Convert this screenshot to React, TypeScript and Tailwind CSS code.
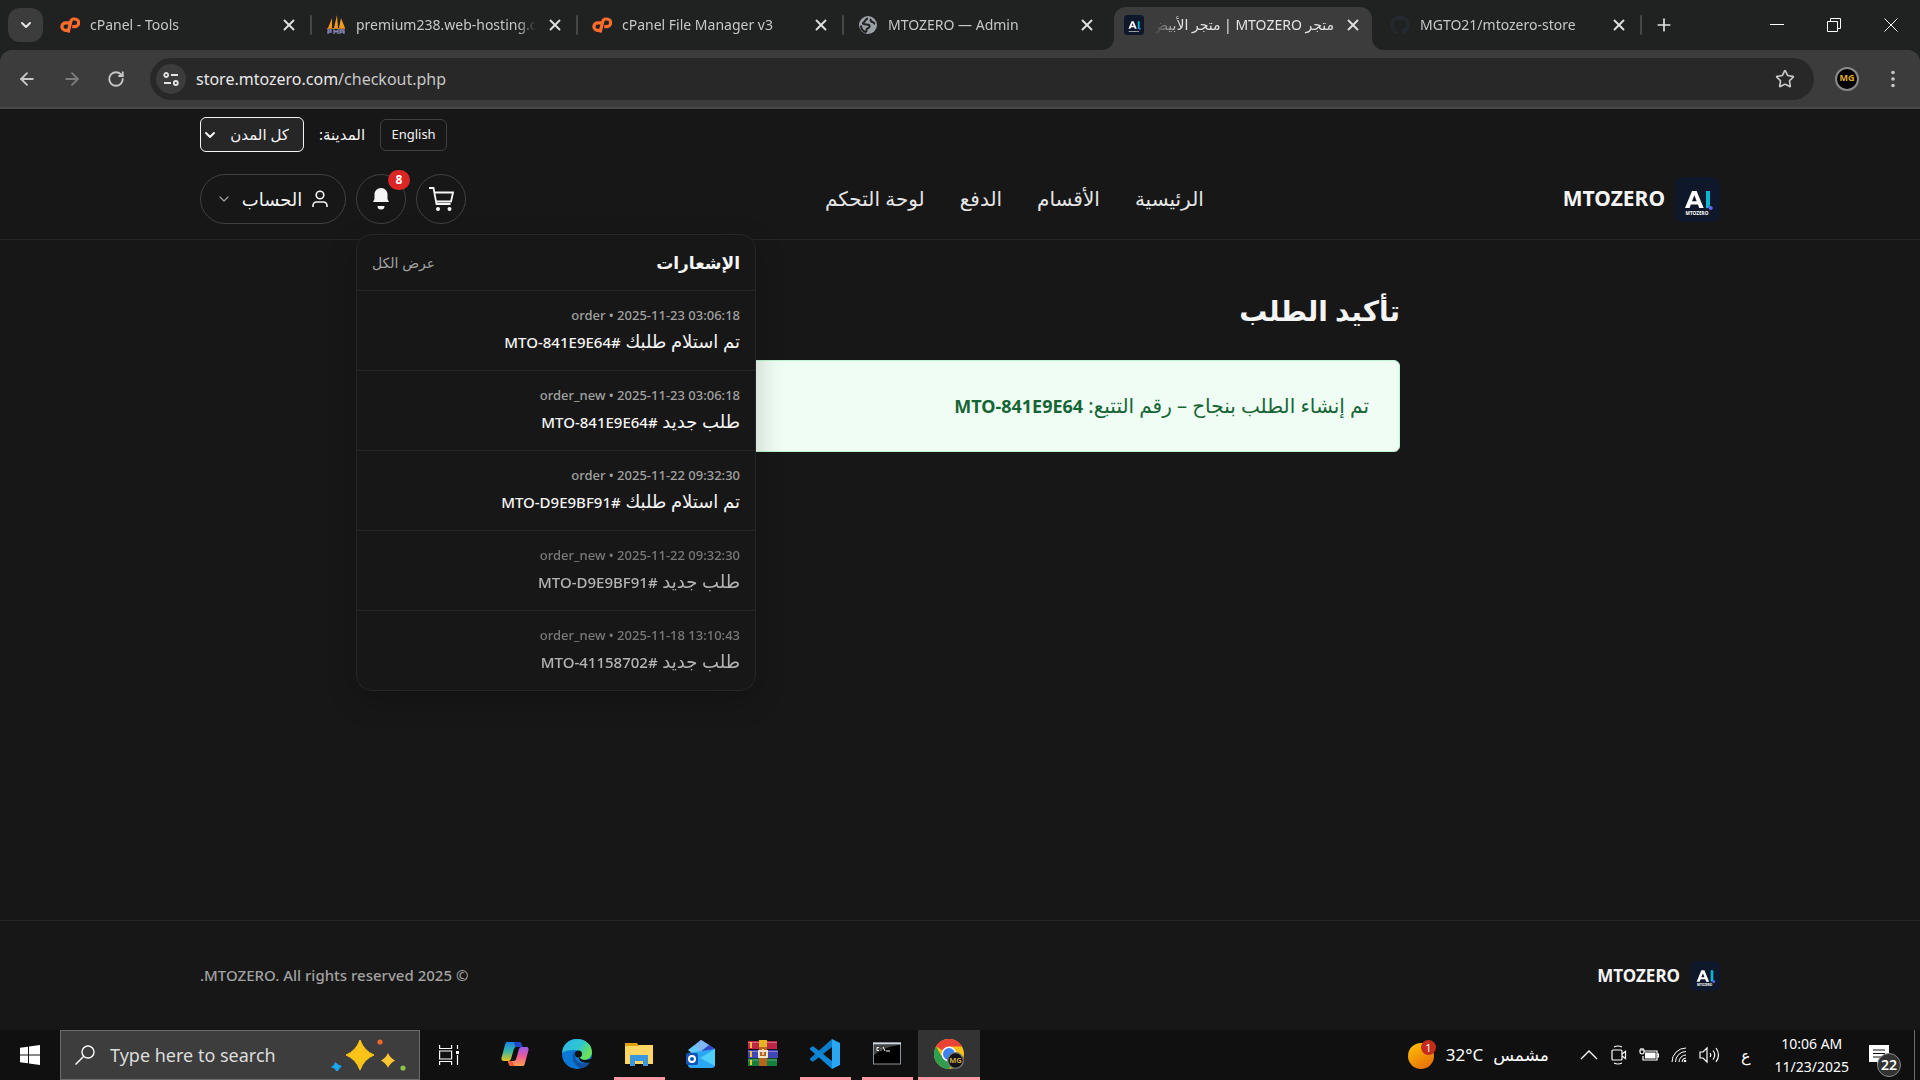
import React from 'react';
import { ArrowLeft, ArrowRight, ChevronDown, Plus, RotateCw, Star, X } from 'lucide-react';
import { FaGithub } from 'react-icons/fa';

interface Tab {
    title: string;
    icon: React.ReactNode;
    active?: boolean;
    divider?: boolean;
}

interface Notice {
    kind: string;
    time: string;
    text: string;
    code: string;
    read?: boolean;
}

const StoreLogo: React.FC<{ className: string }> = ({ className }) => (
    <svg viewBox="0 0 45 45" className={className} aria-hidden="true">
        <rect width="45" height="45" rx="8" fill="#0f172a" />
        <path d="M10 31 17 14h4.600L28.700 31h-4.500l-1.300-3.600h-7L14.500 31zM17 24.300h4.700l-2.300-6z" fill="#fff" />
        <path d="M31 14h4v14a3 3 0 0 1-4 3z" fill="#06b6d4" />
        <circle cx="35.700" cy="31" r="2.100" fill="#6366f1" />
        <text x="22" y="37.500" textAnchor="middle" fontSize="4.700" fontWeight="bold" fill="#fff">MTOZERO</text>
    </svg>
);

const CpanelIcon = () => (
    <svg viewBox="0 0 20 20" className="size-5" fill="none" stroke="#ff6c2c" strokeWidth="3.200" aria-hidden="true">
        <path d="M9.500 7.800H6a3.800 3.800 0 0 0-.6 7.600h1.800" />
        <path d="M8 17.500 10.800 6.500Q11.400 4 13.500 4h1.400a3.700 3.700 0 0 1 0 7.600h-2.600" />
    </svg>
);

const PmaIcon = () => (
    <svg viewBox="0 0 20 20" className="size-5" aria-hidden="true">
        <path d="M2 13 6 3v10zM8 13 11 0l1 13zM13 13l2-10 4 10z" fill="#f39a1e" />
        <path d="M1 13.500h18" stroke="#c87812" />
        <path d="M2 19v-4h3v2H2M8 19v-4l2 2 2-2v4M14 19v-4h4v4M14 17h4" stroke="#8587b8" strokeWidth="1.300" fill="none" />
    </svg>
);

const GlobeIcon = () => (
    <svg viewBox="0 0 20 20" className="size-5" aria-hidden="true">
        <circle cx="10" cy="10" r="9" fill="#9aa0a6" />
        <path d="M10 3.500C7 4 7.500 6.500 5.500 7.500c-1.500 1 0 2 3 2s3.500 1 3 2.500-3 1-3 2.500.5 2-1 2.500C5 16 3 13.500 3 10.500" fill="none" stroke="#202121" strokeWidth="2" />
        <path d="M13 4c-1 2 0 2.500 1.500 3s1.500 1.500 2.500 2" stroke="#202121" strokeWidth="2" fill="none" />
    </svg>
);

const tabs: Tab[] = [
    { title: 'cPanel - Tools', icon: <CpanelIcon />, divider: true },
    { title: 'premium238.web-hosting.c', icon: <PmaIcon />, divider: true },
    { title: 'cPanel File Manager v3', icon: <CpanelIcon />, divider: true },
    { title: 'MTOZERO — Admin', icon: <GlobeIcon /> },
    { title: 'متجر MTOZERO | متجر الأبيض', icon: <StoreLogo className="size-5" />, active: true },
    { title: 'MGTO21/mtozero-store', icon: <FaGithub className="size-5 text-[#24292f]" />, divider: true },
];

const notices: Notice[] = [
    { kind: 'order', time: '2025-11-23 03:06:18', text: 'تم استلام طلبك', code: 'MTO-841E9E64' },
    { kind: 'order_new', time: '2025-11-23 03:06:18', text: 'طلب جديد', code: 'MTO-841E9E64' },
    { kind: 'order', time: '2025-11-22 09:32:30', text: 'تم استلام طلبك', code: 'MTO-D9E9BF91' },
    { kind: 'order_new', time: '2025-11-22 09:32:30', text: 'طلب جديد', code: 'MTO-D9E9BF91', read: true },
    { kind: 'order_new', time: '2025-11-18 13:10:43', text: 'طلب جديد', code: 'MTO-41158702', read: true },
];

const navLinks = ['الرئيسية', 'الأقسام', 'الدفع', 'لوحة التحكم'];

const TabShape = () => (
    <span className="absolute inset-x-1 bottom-0 top-0 rounded-t-xl bg-[#3c3c3c]">
        <svg viewBox="0 0 12 12" className="absolute -left-3 bottom-0 size-3"><path d="M12 0v12H0A12 12 0 0 0 12 0z" fill="#3c3c3c" /></svg>
        <svg viewBox="0 0 12 12" className="absolute -right-3 bottom-0 size-3"><path d="M0 0v12h12A12 12 0 0 1 0 0z" fill="#3c3c3c" /></svg>
    </span>
);

const BrowserTab: React.FC<{ tab: Tab }> = ({ tab }) => (
    <div className="relative w-[266px] min-w-0">
        {tab.active && <TabShape />}
        <div className="relative flex h-9 items-center pl-3.5 pr-3.5">
            {tab.icon}
            <span
                dir={tab.active ? 'rtl' : 'ltr'}
                className={`ml-2.5 mr-2.5 flex-1 overflow-hidden whitespace-nowrap ${
                    tab.active ? 'mask-l-from-85% text-[#e3e3e3]' : 'mask-r-from-90% text-[#c7c7c7]'
                }`}
            >
                {tab.title}
            </span>
            <button aria-label="Close tab" className="text-[#dedede]">
                <X className="size-[18px]" strokeWidth={2.5} />
            </button>
        </div>
        {tab.divider && <span className="absolute right-0 top-2 h-5 w-0.5 rounded bg-[#474747]" />}
    </div>
);

const BrowserChrome = () => (
    <header className="bg-[#202121] text-sm">
        <div className="flex h-[50px]">
            <button aria-label="Search tabs" className="ml-2 mt-2 flex h-[34px] w-[35px] items-center justify-center rounded-xl bg-[#3c3c3c] text-[#e3e3e3]">
                <ChevronDown className="size-4" strokeWidth={3} />
            </button>
            <div className="ml-[3px] flex min-w-0 pt-[7px]">
                {tabs.map((tab) => (
                    <BrowserTab key={tab.title} tab={tab} />
                ))}
            </div>
            <button aria-label="New tab" className="ml-3 text-[#e3e3e3]">
                <Plus className="size-5" />
            </button>
            <div className="ml-auto flex items-center gap-[43px] pr-[22px] text-white">
                <button aria-label="Minimize">
                    <svg viewBox="0 0 14 14" className="size-3.5"><path d="M0 6.500h14" stroke="currentColor" /></svg>
                </button>
                <button aria-label="Restore">
                    <svg viewBox="0 0 14 14" className="size-3.5" fill="none" stroke="currentColor">
                        <path d="M.5 3.500h10v10H.5zM3.500 3.500v-3h10v10h-3" />
                    </svg>
                </button>
                <button aria-label="Close">
                    <svg viewBox="0 0 14 14" className="size-3.5"><path d="m.5.5 13 13m0-13-13 13" stroke="currentColor" /></svg>
                </button>
            </div>
        </div>
        <div className="flex h-[59px] items-center rounded-t-xl border-b-2 border-[#474747] bg-[#3c3c3c] pl-[17px] pr-[17px] text-[#c7c7c7]">
            <div className="flex items-center gap-[25px]">
                <button aria-label="Back"><ArrowLeft className="size-5" strokeWidth={2.2} /></button>
                <button aria-label="Forward" className="text-[#7c7c7c]"><ArrowRight className="size-5" strokeWidth={2.2} /></button>
                <button aria-label="Reload"><RotateCw className="size-[18px]" strokeWidth={2.4} /></button>
            </div>
            <div className="ml-[25px] flex h-[42px] flex-1 items-center rounded-full bg-[#282828] pl-1.5 pr-[19px]">
                <button aria-label="Site information" className="flex size-[30px] items-center justify-center rounded-full bg-[#3c3c3c] text-[#e3e3e3]">
                    <svg viewBox="0 0 16 16" className="size-4" fill="none" stroke="currentColor" strokeWidth="1.800">
                        <circle cx="3.200" cy="4" r="2" />
                        <path d="M8 4h7M1 12h7" />
                        <circle cx="12.800" cy="12" r="2" />
                    </svg>
                </button>
                <div className="ml-2.5 flex-1 text-base text-[#c7c7c7]">
                    <span className="text-[#e8e8e8]">store.mtozero.com</span>/checkout.php
                </div>
                <button aria-label="Bookmark"><Star className="size-5" /></button>
            </div>
            <div className="ml-[21px] flex size-6 items-center justify-center rounded-full border-2 border-[#8a8a8a] bg-black text-[9px] font-bold text-[#e0a92e]">MG</div>
            <button aria-label="Menu" className="ml-6">
                <svg viewBox="0 0 20 20" className="size-5" fill="currentColor">
                    <circle cx="10" cy="3.500" r="1.800" /><circle cx="10" cy="10" r="1.800" /><circle cx="10" cy="16.500" r="1.800" />
                </svg>
            </button>
        </div>
    </header>
);

const NotificationPanel = () => (
    <div className="absolute left-0 top-full z-10 mt-2.5 w-[400px] overflow-hidden rounded-2xl border border-[#262626] bg-[#171717] shadow-[0_10px_30px_rgba(0,0,0,0.2)]">
        <div className="flex h-[55px] items-center justify-between px-[15px]">
            <strong className="text-[17px] leading-6 text-neutral-100">الإشعارات</strong>
            <a href="#all" className="text-sm text-neutral-400">عرض الكل</a>
        </div>
        <ul>
            {notices.map((n) => (
                <li key={n.kind + n.time} className="h-20 border-t border-[#262626] px-[15px] py-3.5 font-medium">
                    <div className={n.read ? 'opacity-70' : ''}>
                        <div dir="ltr" className="text-right text-[13px] leading-5 text-neutral-400">
                            {n.kind} • {n.time}
                        </div>
                        <div className="mt-1 text-lg leading-6 text-neutral-100">
                            {n.text} <bdi dir="ltr" className="text-[15px]">{n.code}#</bdi>
                        </div>
                    </div>
                </li>
            ))}
        </ul>
    </div>
);

const StoreHeader = () => (
    <header className="h-[131px] border-b border-[#262626] px-[200px] pt-2">
        <div className="flex h-[35px] items-center justify-end gap-[15px] text-[15px] text-neutral-100">
            <button className="h-8 w-[67px] rounded-md border border-neutral-700 text-[13px]">English</button>
            <label htmlFor="city">المدينة:</label>
            <div className="relative">
                <select id="city" className="h-[35px] w-[104px] appearance-none rounded-md border border-neutral-100 bg-[#262626] pr-3.5">
                    <option>كل المدن</option>
                </select>
                <ChevronDown className="pointer-events-none absolute left-0.5 top-2.5 size-4" strokeWidth={3} />
            </div>
        </div>
        <div className="mt-[22px] flex items-center justify-between">
            <a href="#home" className="flex items-center gap-2.5 text-[21px] font-bold text-neutral-100">
                <StoreLogo className="size-[45px]" />
                MTOZERO
            </a>
            <nav className="flex gap-[35px] text-xl font-medium text-neutral-200">
                {navLinks.map((link) => (
                    <a key={link} href="#nav">{link}</a>
                ))}
            </nav>
            <div className="flex gap-2.5 text-neutral-100">
                <button aria-label="السلة" className="flex size-[50px] items-center justify-center rounded-full border border-neutral-700">
                    <svg viewBox="0 0 26 26" className="size-[26px]" fill="none" stroke="currentColor" strokeWidth="1.800">
                        <path d="M1 2h4.500l3 16h14M6.500 6.500H25l-2 9H8" />
                        <circle cx="10" cy="23" r="2" fill="currentColor" stroke="none" />
                        <circle cx="21.500" cy="23" r="2" fill="currentColor" stroke="none" />
                    </svg>
                </button>
                <div className="relative">
                    <button aria-label="الإشعارات" className="flex size-[50px] items-center justify-center rounded-full border border-neutral-700">
                        <svg viewBox="0 0 20 24" className="size-6" fill="currentColor">
                            <path d="M10 1c-4 0-6.500 3-6.500 6.500V12L2 15h16l-1.500-3V7.500C16.500 4 14 1 10 1zM6.500 19h7a3.500 3.500 0 0 1-7 0z" />
                        </svg>
                    </button>
                    <span className="absolute -right-1 -top-1 flex h-5 w-[22px] items-center justify-center rounded-full bg-[#dc2626] text-xs font-bold text-white">8</span>
                    <NotificationPanel />
                </div>
                <button className="flex h-[50px] w-[146px] items-center justify-between rounded-full border border-neutral-700 px-[15px] text-lg font-medium">
                    <svg viewBox="0 0 16 18" className="mr-0.5 h-[18px] w-4" fill="none" stroke="currentColor" strokeWidth="1.600">
                        <circle cx="8" cy="5" r="3.800" />
                        <path d="M1 17v-1.500A3.500 3.500 0 0 1 4.500 12h7a3.500 3.500 0 0 1 3.500 3.500V17" />
                    </svg>
                    الحساب
                    <ChevronDown className="size-4 text-neutral-400" strokeWidth={1.8} />
                </button>
            </div>
        </div>
    </header>
);

const StorePage = () => (
    <div dir="rtl" className="flex flex-1 flex-col bg-[#171717]">
        <StoreHeader />
        <main className="mx-auto w-full max-w-[880px] flex-1 pt-[50px]">
            <h1 className="text-[28px] font-bold leading-10 text-neutral-100">تأكيد الطلب</h1>
            <div className="mt-[30px] flex h-[92px] items-center rounded-md border border-[#bbf7d0] bg-[#f0fdf4] px-[30px] text-xl text-[#166534]">
                <p>
                    تم إنشاء الطلب بنجاح – رقم التتبع: <strong dir="ltr" className="text-lg">MTO-841E9E64</strong>
                </p>
            </div>
        </main>
        <footer className="flex h-[110px] items-center justify-between border-t border-[#262626] px-[200px]">
            <div className="flex items-center gap-2.5 text-[17px] font-bold text-neutral-100">
                <StoreLogo className="size-[30px]" />
                MTOZERO
            </div>
            <p className="text-[15px] font-medium text-neutral-400">© 2025 MTOZERO. All rights reserved.</p>
        </footer>
    </div>
);

const TaskIcon: React.FC<{ label: string; line?: string; active?: boolean; children: React.ReactNode }> = ({ label, line, active, children }) => (
    <button
        aria-label={label}
        className={`flex w-[62px] flex-col items-center ${active ? 'bg-[#333]' : ''}`}
    >
        <span className="flex h-[47px] items-center">
            <svg viewBox="0 0 30 30" className="size-[30px]">{children}</svg>
        </span>
        {line && <span className={`h-[3px] bg-[#ff99a4] ${line}`} />}
    </button>
);

const TaskIcons = () => (
    <div className="flex">
        <TaskIcon label="Copilot">
            <defs>
                <linearGradient id="cpA" x1="0" y1="0" x2="0" y2="1">
                    <stop offset="0" stopColor="#1784e8" /><stop offset=".5" stopColor="#3bb8a0" /><stop offset="1" stopColor="#e8c51c" />
                </linearGradient>
                <linearGradient id="cpB" x1="0" y1="0" x2="0" y2="1">
                    <stop offset="0" stopColor="#9a5cf0" /><stop offset=".5" stopColor="#ec5b95" /><stop offset="1" stopColor="#ffa14a" />
                </linearGradient>
            </defs>
            <path d="M7 3h11c3 0 3 1 4 5h-5c-3 0-3 2-4 5l-2 7c-1 2-2 2-4 2H4c-3 0-3-2-2-5l3-11c.5-2 1-3 2-3z" fill="url(#cpA)" />
            <path d="M14 3h5c2 0 3 2 3.500 5H16c-2 0-1-3-2-5z" fill="#2347c5" />
            <path d="M23 27H12c-3 0-3-1-4-5h5c3 0 3-2 4-5l2-7c1-2 2-2 4-2h3c3 0 3 2 2 5l-3 11c-.5 2-1 3-2 3z" fill="url(#cpB)" />
            <path d="M8 22h3c2 0 2 3 4 5h-3c-2 0-3-1-4-5z" fill="#f05a3c" />
        </TaskIcon>
        <TaskIcon label="Edge">
            <defs>
                <linearGradient id="edge" x1="0" y1="0" x2="1" y2=".5">
                    <stop offset="0" stopColor="#2fb5ee" /><stop offset=".6" stopColor="#2fc5cf" /><stop offset="1" stopColor="#6be254" />
                </linearGradient>
            </defs>
            <circle cx="15" cy="15" r="15" fill="#0a78d4" />
            <path d="M0 14C1 5 7 0 15 0c9 0 15 6 15 13 0 5-4 8-8 8-3 0-5-1-4-3 2-3 0-7-5-7-6 0-11 1-13 3z" fill="url(#edge)" />
            <path d="M12 13c-4 8 2 16 9 16 3-1 6-3 7-6-6 3-14 1-15-5 0-2 0-3 1-5z" fill="#1151a0" />
            <circle cx="16.500" cy="15" r="3.500" fill="#101010" />
            <path d="M17 17c1 4 7 5.500 13 2v4l-2 .5c-5 1-10-.5-11-3.500z" fill="#101010" />
        </TaskIcon>
        <TaskIcon label="File Explorer" line="w-[51px]">
            <path d="M1 4h12l2 3v8H1z" fill="#e0a100" />
            <path d="M1 7h12l2-1h14v19H1z" fill="#ffd563" />
            <path d="M6 27V16h18v11h-5v-5h-8v5z" fill="#3a97de" />
        </TaskIcon>
        <TaskIcon label="Outlook">
            <path d="M2 11 15 1l14 9-14 12z" fill="#66c8f8" />
            <path d="m9 6 6-5 14 9-8 6z" fill="#2f49c8" />
            <path d="m15 1 8 5-9 7-5-7z" fill="#7fb7f5" />
            <path d="M2 14 29 10v15c0 3-1 4-4 4H6c-3 0-4-1-4-4z" fill="#2ba6f2" />
            <path d="M29 10v17L14 19z" fill="#4fd0fb" />
            <rect y="14" width="12" height="12" rx="2" fill="#0f55b5" />
            <circle cx="6" cy="20" r="3" fill="none" stroke="#fff" strokeWidth="2" />
        </TaskIcon>
        <TaskIcon label="WinRAR">
            <path d="M0 2h29v8H0z" fill="#bd2648" />
            <path d="M0 11h30v8H0z" fill="#4147b8" />
            <path d="M0 19.500h29V27H0z" fill="#15803d" />
            <path d="M0 3.500h29M0 12.500h30M0 21h29" stroke="#fff" strokeOpacity=".3" />
            <path d="M3 3v6M3 12v6M3 21v5" stroke="#f5c52b" strokeWidth="2" />
            <path d="M11 1h8v26h-8z" fill="#b5651d" />
            <path d="M11 1h8v7h-8z" fill="#e6b422" />
            <path d="M11 12h8v6h-8z" fill="none" stroke="#f1e4c6" strokeWidth="2" />
            <path d="M15 10v6" stroke="#f1e4c6" strokeWidth="1.500" />
        </TaskIcon>
        <TaskIcon label="VS Code" line="w-[51px]">
            <path d="M0 19.500 22 0v8L3.500 22.500 2 22.500 0 20.700z" fill="#0b7dca" />
            <path d="M0 10.500 22 30v-8L3.500 7.500 2 7.500 0 9.300z" fill="#0f86d6" />
            <path d="M22 0v30l8-4V4z" fill="#2aa7f3" />
        </TaskIcon>
        <TaskIcon label="Command Prompt" line="w-[51px]">
            <rect x="1.500" y="4" width="27" height="21" fill="#000" stroke="#8b949e" />
            <path d="M1 4.500h28" stroke="#cfd8e3" strokeWidth="2" />
            <path d="M2 6h26c-10 1-18 4-26 10z" fill="#444" />
            <path d="M7 8.500H5v3h2M9 9v.5m0 1.500v.5M11 8l2 4M14 12h4" stroke="#fff" fill="none" />
        </TaskIcon>
        <TaskIcon label="Chrome" active line="w-full">
            <circle cx="15" cy="15" r="15" fill="#fbc116" />
            <path d="M15 15 2 7.500A15 15 0 0 1 28 7.500H15z" fill="#ea4335" />
            <path d="M2 7.500A15 15 0 0 0 15 30l6.500-11.500L8.500 18.500z" fill="#2f9e4f" />
            <circle cx="15" cy="15" r="7.500" fill="#fff" />
            <circle cx="15" cy="15" r="6" fill="#3c82f0" />
            <circle cx="21.500" cy="21.500" r="7.800" fill="#111" stroke="#777" strokeWidth="1.300" />
            <text x="21.500" y="24.200" textAnchor="middle" fontSize="7.500" fontWeight="bold" fill="#d0a94a">MG</text>
        </TaskIcon>
    </div>
);

const Tray = () => (
    <div className="ml-auto flex items-center text-[17px] text-white">
        <button className="flex items-center">
            <svg viewBox="0 0 28 30" className="h-[30px] w-7" aria-hidden="true">
                <defs>
                    <linearGradient id="sun" x1="0" y1="0" x2=".6" y2="1">
                        <stop offset="0" stopColor="#ffc800" /><stop offset="1" stopColor="#e8710a" />
                    </linearGradient>
                </defs>
                <circle cx="13" cy="16" r="13" fill="url(#sun)" />
                <circle cx="20.500" cy="7.500" r="7.500" fill="#c42b1c" />
                <text x="20.500" y="11.500" textAnchor="middle" fontSize="11" fill="#fff">1</text>
            </svg>
            <span className="ml-2.5">32°C</span>
            <span className="ml-2.5" dir="rtl">مشمس</span>
        </button>
        <div className="ml-[30px] flex items-center gap-3">
            <svg viewBox="0 0 20 20" className="size-5" fill="none" stroke="currentColor" strokeWidth="1.400">
                <path d="m2 14 8-8 8 8" />
            </svg>
            <svg viewBox="0 0 16 20" className="h-5 w-4" fill="none" stroke="currentColor" strokeWidth="1.200">
                <rect x="1" y="5" width="10" height="10" rx="1" />
                <path d="m11 9 3.500-2.500v7L11 11M3 2q4-2 8 0M3 18q4 2 8 0" />
            </svg>
            <svg viewBox="0 0 20 16" className="h-4 w-5" fill="none" stroke="currentColor" strokeWidth="1.200">
                <path d="M5 4h13v9H4v-4M18 7h1.500v3H18M1 3h4v2a2 2 0 0 1-4 0zM2 3V1M4 3V1" />
                <path d="M6.500 6h9.500v5H6.500z" fill="currentColor" />
            </svg>
            <svg viewBox="0 0 16 16" className="size-4" fill="none" stroke="currentColor">
                <path d="M1 15A14 14 0 0 1 15 1M4.500 15A10.500 10.500 0 0 1 15 4.500M8 15a7 7 0 0 1 7-7M11 15a4 4 0 0 1 4-4" />
                <circle cx="14" cy="14" r="1.300" fill="currentColor" stroke="none" />
            </svg>
            <svg viewBox="0 0 22 18" className="h-[18px] w-[22px]" fill="none" stroke="currentColor" strokeWidth="1.200">
                <path d="M1 6h3l4-4v14l-4-4H1zM11 7q1.500 2 0 4M14 4.500q3.500 4.500 0 9M17 2q5 7 0 14" />
            </svg>
        </div>
        <span className="ml-5 text-base">ع</span>
        <div className="ml-6 text-center text-sm leading-[23px]">
            <div>10:06 AM</div>
            <div>11/23/2025</div>
        </div>
        <button aria-label="22 notifications" className="relative ml-5 mr-[25px]">
            <svg viewBox="0 0 20 20" className="size-5">
                <path d="M0 0h20v17h-8l-4 3v-3H0z" fill="#fff" />
                <path d="M4 5h12M4 8.500h12M4 12h8" stroke="#101010" />
            </svg>
            <span className="absolute left-2 top-2 flex size-6 items-center justify-center rounded-full border border-[#888] bg-[#333] text-sm font-semibold">22</span>
        </button>
        <span className="mr-[5px] h-[50px] w-px bg-[#6b6b6b]" />
    </div>
);

const Taskbar = () => (
    <footer className="flex h-[50px] bg-[#101010]">
        <button aria-label="Start" className="flex w-[60px] items-center justify-center">
            <svg viewBox="0 0 20 20" className="size-5" fill="#fff">
                <path d="m0 2.800 8-1.100v7.800H0zM9 1.500 20 0v9.500H9zM0 10.500h8v7.800l-8-1.100zM9 10.500h11V20L9 18.500z" />
            </svg>
        </button>
        <div className="flex w-[360px] items-center border border-[#6b6b6b] bg-[#3d3d3d] pl-3.5 pr-3">
            <svg viewBox="0 0 20 20" className="size-5 text-white" fill="none" stroke="currentColor" strokeWidth="1.400">
                <circle cx="13" cy="7" r="6" />
                <path d="M8.500 11.500.5 19.500" />
            </svg>
            <input
                type="text"
                aria-label="Search"
                placeholder="Type here to search"
                className="ml-[15px] w-0 flex-1 bg-transparent text-lg outline-none placeholder:text-[#dcdcdc]"
            />
            <svg viewBox="0 0 76 32" className="h-8 w-[76px]" aria-hidden="true">
                <path d="M29 1q4 11 14 15-10 4-14 15-4-11-14-15Q25 12 29 1z" fill="#fcc419" stroke="#fcc419" strokeLinejoin="round" />
                <path d="M57 14q2 5 7 7.500-5 2.500-7 7.500-2-5-7-7.500Q55 19 57 14z" fill="#fcc935" />
                <path d="m4 23 4 3 3 1-3 3-2 4-2-4-4-2 3-2z" fill="#1aa7ee" />
                <circle cx="49" cy="3" r="2.600" fill="#f0682c" />
                <circle cx="72" cy="29" r="2.600" fill="#8bc34a" />
            </svg>
        </div>
        <button aria-label="Task View" className="mr-1.5 flex w-[58px] items-center justify-center text-white">
            <svg viewBox="0 0 20 20" className="size-5" fill="none" stroke="currentColor" strokeWidth="1.200">
                <path d="M.6 0v3.500h12V0M.6 6h12v8H.6zM.6 20v-3.500h12V20M18.500 0v4M18.500 10v10" />
                <path d="M17 6h3v3h-3z" fill="currentColor" stroke="none" />
            </svg>
        </button>
        <TaskIcons />
        <Tray />
    </footer>
);

const App = () => (
    <div className="flex min-h-screen flex-col font-['Noto_Sans','DejaVu_Sans',sans-serif]">
        <BrowserChrome />
        <StorePage />
        <Taskbar />
    </div>
);

export default App;
